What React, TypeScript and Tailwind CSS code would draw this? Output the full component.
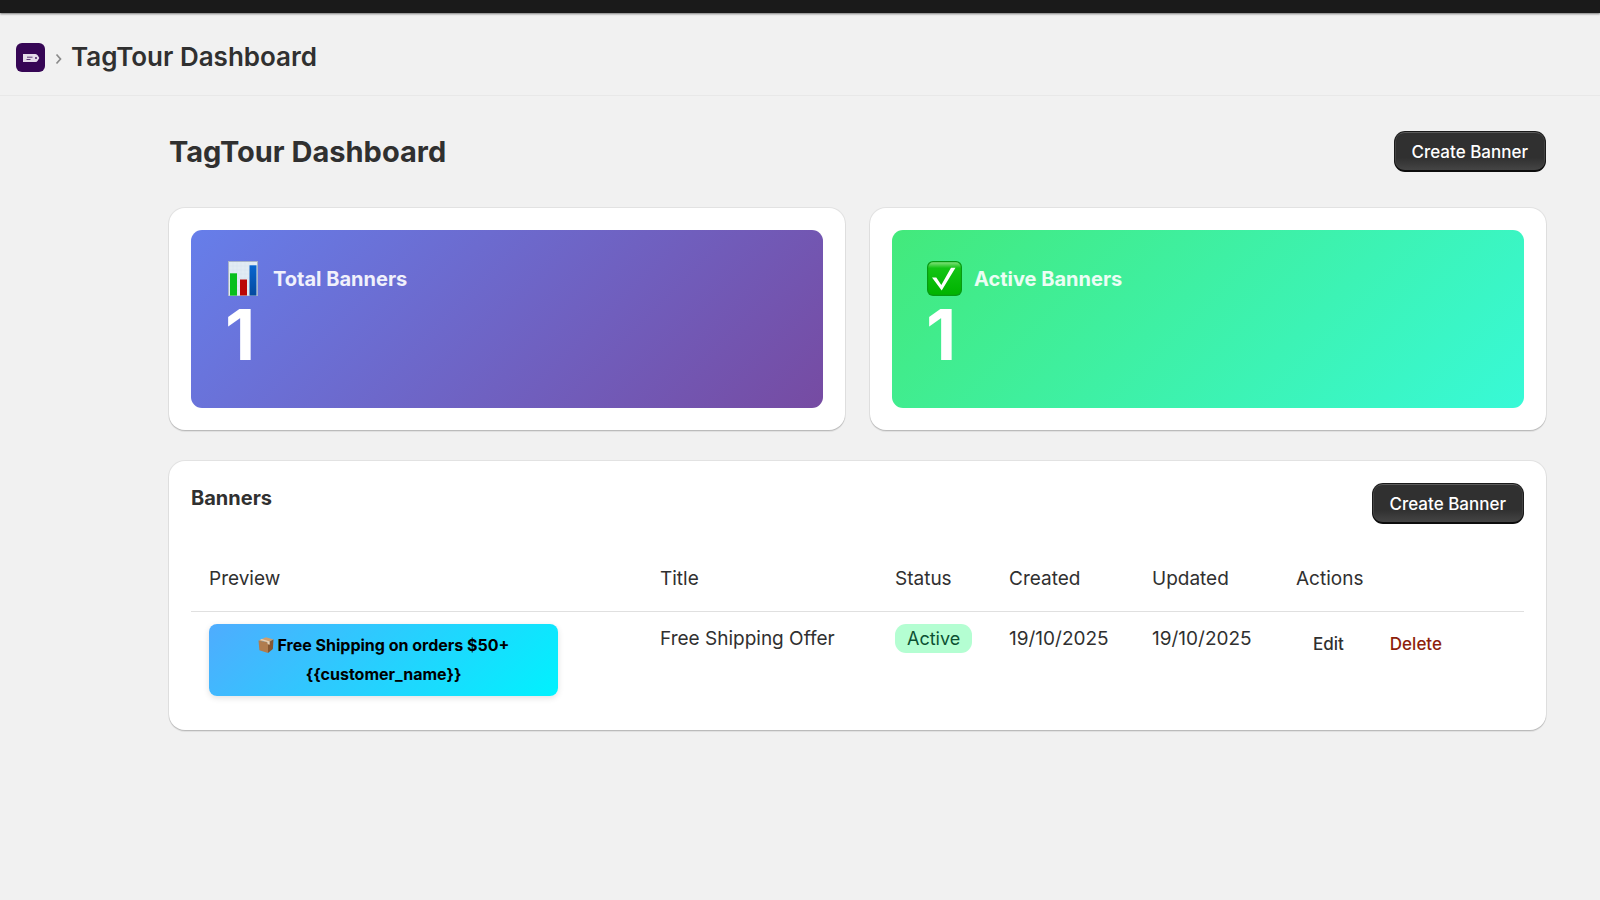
import type { ReactNode } from "react";

function AppLogo() {
  return (
    <svg viewBox="0 0 29 29" className="size-[29px] shrink-0" aria-hidden="true">
      <rect width="29" height="29" rx="6" fill="#360655" />
      <path d="M7 11h12.500q1.500 0 2.300 1.500l1.500 2.500-1.500 2.500q-.8 1.500-2.300 1.500H7z" fill="#e4dce9" />
      <path d="M11 14.200h5.500M10.500 16.500h4" stroke="#5d3a76" strokeWidth="1" />
      <circle cx="20" cy="15" r=".9" fill="#360655" />
    </svg>
  );
}

function ChartEmoji() {
  return (
    <svg viewBox="0 0 36 36" className="size-9 shrink-0" aria-hidden="true">
      <defs>
        <linearGradient id="chartBlue" x1="0" y1="0" x2="0" y2="1">
          <stop offset="0" stopColor="#0765d0" />
          <stop offset="1" stopColor="#044a9e" />
        </linearGradient>
      </defs>
      <rect x="3" y="0" width="30" height="35" fill="#a9b4c8" />
      <rect x="4" y="1" width="28" height="33.500" fill="#e2ebf3" />
      <path d="M8 1v33M12 1v33M16 1v33M20 1v33M24 1v33M28 1v33M4 5h28M4 9h28M4 13h28M4 17h28M4 21h28M4 25h28M4 29h28" stroke="#d6e1ec" strokeWidth=".5" />
      <rect x="5" y="12.300" width="7" height="22.300" fill="#08bf1c" />
      <rect x="15" y="18.500" width="7" height="16" fill="#bb0606" />
      <rect x="24.500" y="4.300" width="7" height="30.300" fill="url(#chartBlue)" />
    </svg>
  );
}

function CheckEmoji() {
  return (
    <svg viewBox="0 0 36 36" className="size-9 shrink-0" aria-hidden="true">
      <defs>
        <linearGradient id="checkGreen" x1="0" y1="0" x2="0" y2="1">
          <stop offset="0" stopColor="#7fe07a" />
          <stop offset=".18" stopColor="#12c414" />
          <stop offset="1" stopColor="#00b300" />
        </linearGradient>
      </defs>
      <rect x="1" y="0" width="35" height="35" rx="6" fill="#079a12" />
      <rect x="2.200" y="1.200" width="32.600" height="32.600" rx="5" fill="url(#checkGreen)" />
      <path d="M6 16.500h4.300l5 7.500 9.700-17.300h4.500L15.700 29.500z" fill="#fff" />
    </svg>
  );
}

function PackageEmoji() {
  return (
    <svg viewBox="0 0 16 16" className="size-4 shrink-0" aria-hidden="true">
      <path d="M.5 3.500 8 .3l7.500 2.300-5.500 3z" fill="#cf9e6f" />
      <path d="M.5 3.500 10 5.600V16l-8.600-2.800z" fill="#b07c4e" />
      <path d="m15.500 2.600-5.500 3V16l4.900-4z" fill="#855731" />
      <path d="m3.700 2.100 8 2.500v3.200l-2-.6-.4-2.100L2 2.900z" fill="#e6d2b7" />
    </svg>
  );
}

function PrimaryButton({ children }: { children: ReactNode }) {
  return (
    <button
      type="button"
      className="h-[41px] rounded-[11px] bg-[#303030] bg-linear-to-b from-[#303030] from-65% to-[#484848] px-[18px] text-[17px] leading-6 font-[550] text-white shadow-[inset_0_-2px_0_0_#0d0d0d,inset_0_0_0_1px_#1a1a1a,inset_0_2px_0_0_#5c5c5c,inset_2px_0_0_0_#444,inset_-2px_0_0_0_#444]"
    >
      {children}
    </button>
  );
}

const cardClass =
  "rounded-2xl bg-white p-[22px] shadow-[0_1px_1px_0_rgba(0,0,0,0.13),0_0_0_1px_rgba(0,0,0,0.06),0_2px_1px_0_rgba(0,0,0,0.06)]";

function StatCard({ icon, label, value, tone }: { icon: ReactNode; label: string; value: number; tone: string }) {
  return (
    <section className={cardClass}>
      <div className={`h-[178px] rounded-[11px] px-[34px] pt-[31px] text-white ${tone}`}>
        <div className="flex h-9 items-center gap-3">
          {icon}
          <h2 className="text-[20px] leading-6 font-[650] text-white/90">{label}</h2>
        </div>
        <p className="text-[70px] leading-[76px] font-bold">{value}</p>
      </div>
    </section>
  );
}

export default function App() {
  return (
    <div className="min-h-screen bg-[#f1f1f1] font-['Inter',sans-serif] text-[#303030]">
      <div className="h-[13px] bg-[#1a1a1a] shadow-[0_1px_2px_rgba(0,0,0,0.5)]" />
      <header className="flex h-[83px] items-center border-b border-[#e8e8e8] px-4 pt-[6px]">
        <AppLogo />
        <svg viewBox="0 0 6 12" className="mr-[9px] ml-[10px] mt-1 h-3 w-[7px]" fill="none" stroke="#8a8a8a" strokeWidth="1.700" aria-hidden="true">
          <path d="m1 1.500 4 4.500-4 4.500" />
        </svg>
        <p className="text-[26px] leading-8 font-semibold">TagTour Dashboard</p>
      </header>

      <main className="pt-[35px] pr-[54px] pl-[169px]">
        <div className="flex items-center justify-between">
          <h1 className="text-[29px] leading-9 font-[650]">TagTour Dashboard</h1>
          <PrimaryButton>Create Banner</PrimaryButton>
        </div>

        <div className="mt-9 grid grid-cols-2 gap-[25px]">
          <StatCard icon={<ChartEmoji />} label="Total Banners" value={1} tone="bg-[linear-gradient(135deg,#667eea_0%,#764ba2_100%)]" />
          <StatCard icon={<CheckEmoji />} label="Active Banners" value={1} tone="bg-[linear-gradient(135deg,#43e97b_0%,#38f9d7_100%)]" />
        </div>

        <section className={`mt-[31px] ${cardClass}`}>
          <div className="flex items-start justify-between">
            <h2 className="text-[20px] leading-[30px] font-[650]">Banners</h2>
            <PrimaryButton>Create Banner</PrimaryButton>
          </div>
          <table className="mt-6 w-full table-fixed text-left text-[19px] leading-7">
            <colgroup>
              <col className="w-[451px]" />
              <col className="w-[235px]" />
              <col className="w-[114px]" />
              <col className="w-[143px]" />
              <col className="w-[144px]" />
              <col />
            </colgroup>
            <thead>
              <tr className="h-[63px] border-b border-[#e0e0e0]">
                {["Preview", "Title", "Status", "Created", "Updated", "Actions"].map((name) => (
                  <th key={name} scope="col" className="pl-[18px] font-normal">{name}</th>
                ))}
              </tr>
            </thead>
            <tbody>
              <tr className="align-top">
                <td className="py-3 pl-[18px]">
                  <div className="w-[349px] rounded-lg bg-[linear-gradient(135deg,#4facfe_0%,#00f2fe_100%)] px-4 py-[7px] text-center text-[16px] leading-[29px] font-bold text-black shadow-[0_2px_6px_rgba(0,0,0,0.12)]">
                    <div className="flex items-center justify-center gap-1">
                      <PackageEmoji />
                      <span>Free Shipping on orders $50+</span>
                    </div>
                    <div>{"{{customer_name}}"}</div>
                  </div>
                </td>
                <td className="pt-[13px] pl-[18px]">Free Shipping Offer</td>
                <td className="pt-3 pl-[18px]">
                  <span className="inline-block rounded-[11px] bg-[#b4fed2] px-3 text-[18px] leading-[29px] text-[#0c5132]">Active</span>
                </td>
                <td className="pt-[13px] pl-[18px]">19/10/2025</td>
                <td className="pt-[13px] pl-[18px]">19/10/2025</td>
                <td className="pt-3 pl-[18px]">
                  <div className="flex gap-3 text-[17px] leading-10 font-[550]">
                    <button type="button" className="px-[17px]">Edit</button>
                    <button type="button" className="px-[17px] text-[#8e1f0b]">Delete</button>
                  </div>
                </td>
              </tr>
            </tbody>
          </table>
        </section>
      </main>
    </div>
  );
}
